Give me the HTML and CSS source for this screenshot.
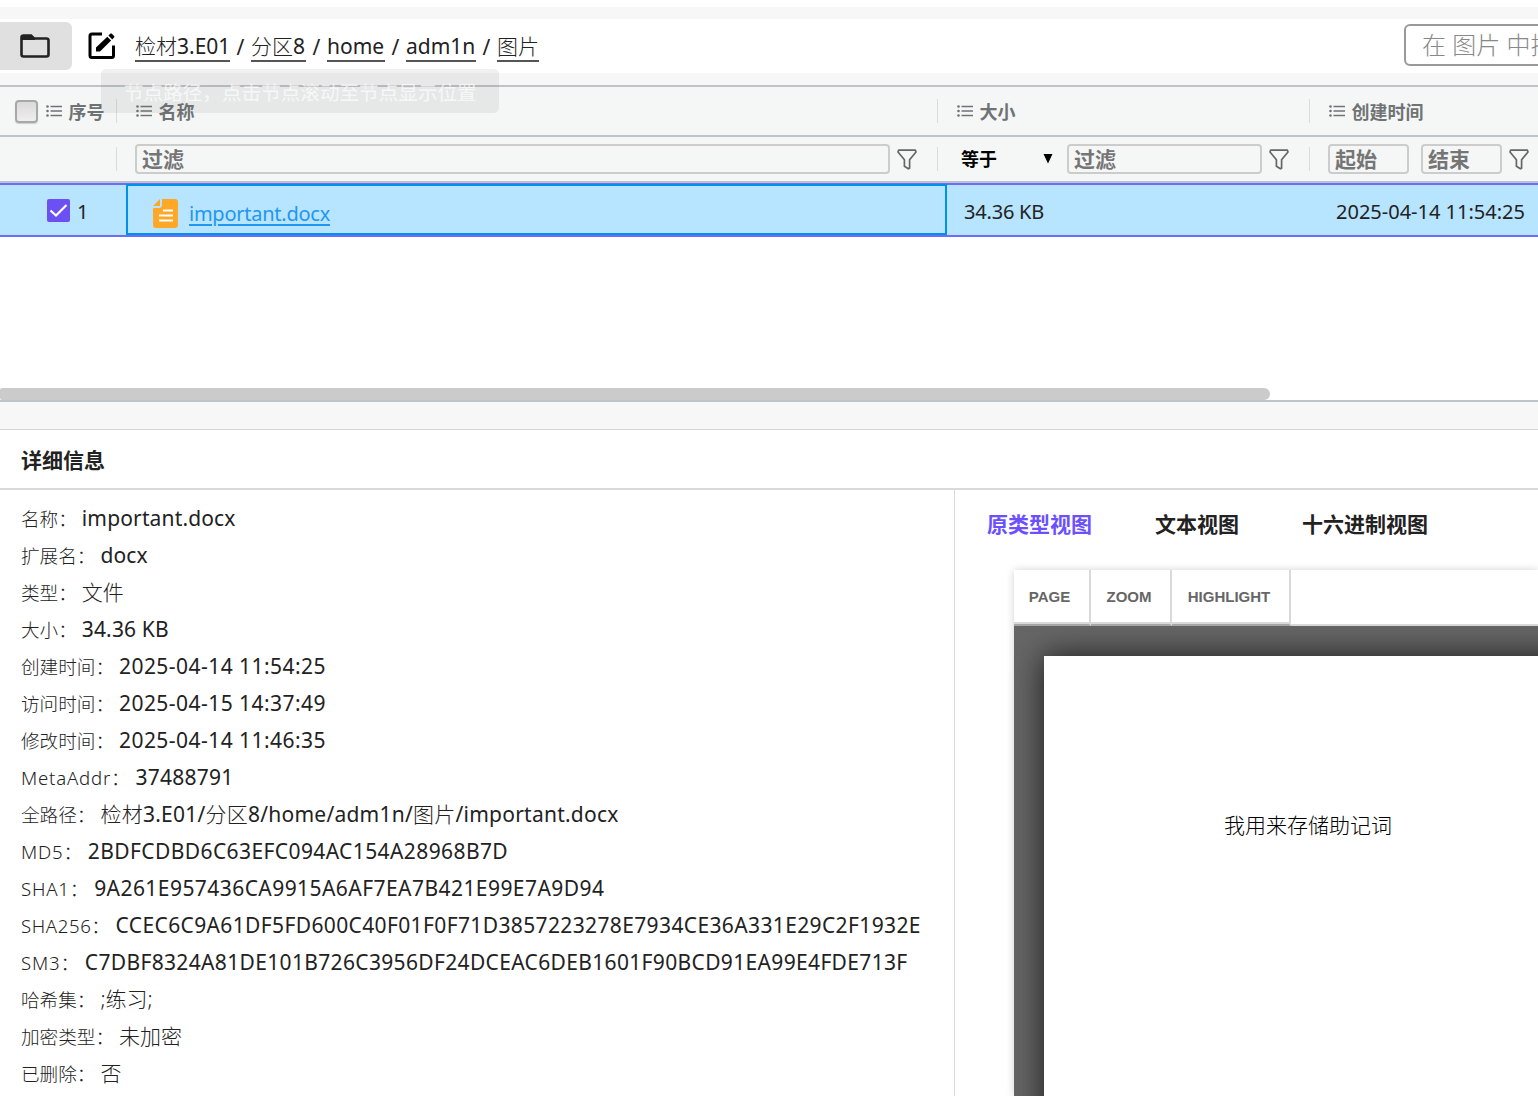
FILE: index.html
```html
<!DOCTYPE html>
<html lang="zh-CN">
<head>
<meta charset="utf-8">
<title>文件详情</title>
<link rel="stylesheet" href="styles.css">
</head>
<body>
<svg class="defs" width="0" height="0">
  <symbol id="list" viewBox="0 0 16 12"><path d="M4.5 1.5H16M4.5 6H16M4.5 10.5H16" stroke="currentColor" stroke-width="1.3"/><g fill="currentColor"><circle cx="1.5" cy="1.5" r="1.3"/><circle cx="1.5" cy="6" r="1.3"/><circle cx="1.5" cy="10.5" r="1.3"/></g></symbol>
  <symbol id="funnel" viewBox="0 0 20 21"><path d="M1.6 1.2H18.4L19 3L12.6 10.8V19.2L11.4 19.8L7.4 17.2V10.8L1 3Z" fill="none" stroke="currentColor" stroke-width="1.7" stroke-linejoin="round"/></symbol>
</svg>
<header class="toolbar">
  <button class="folder"><svg width="30" height="25" viewBox="0 0 30 25"><path d="M3.500 1.500H11L14 4.500H26.500Q28.500 4.500 28.500 6.500V20.500Q28.500 22.500 26.500 22.500H3.500Q1.500 22.500 1.500 20.500V3.500Q1.500 1.500 3.500 1.500Z" fill="none" stroke="#222" stroke-width="2.600"/><path d="M2 1.500H11.500L15 4.500V6H2Z" fill="#222"/></svg></button>
  <svg class="edit" width="28" height="28" viewBox="0 0 28 28"><path d="M14 2H4Q2 2 2 4V23.500Q2 25.500 4 25.500H23.500Q25.500 25.500 25.500 23.500V13.500" fill="none" stroke="#000" stroke-width="3"/><path d="M8 15.500L19.300 4.700L23.100 8.500L12 19.500H8ZM20.400 3.600L22.300 1.700Q23 1 23.800 1.700L26.100 4Q26.800 4.700 26.100 5.500L24.200 7.400Z"/></svg>
  <nav class="crumbs"><a class="c1"><span class="cjk">检材</span>3.E01</a><i>/</i><a class="c2"><span class="cjk">分区</span>8</a><i>/</i><a class="c3">home</a><i>/</i><a class="c4">adm1n</a><i>/</i><a class="c5"><span class="cjk">图片</span></a></nav>
  <div class="search">在 图片 中搜索</div>
  <div class="tooltip">节点路径，点击节点滚动至节点显示位置</div>
</header>
<section class="table">
  <div class="row head">
    <div class="cell num"><span class="box"></span><svg class="list"><use href="#list"/></svg><b>序号</b></div>
    <div class="cell"><svg class="list"><use href="#list"/></svg><b>名称</b></div>
    <div class="cell"><svg class="list"><use href="#list"/></svg><b>大小</b></div>
    <div class="cell last"><svg class="list"><use href="#list"/></svg><b>创建时间</b></div>
  </div>
  <div class="row filters">
    <div class="cell"></div>
    <div class="cell"><span class="input grow">过滤</span><svg class="funnel"><use href="#funnel"/></svg></div>
    <div class="cell"><span class="select">等于<svg width="10" height="10" viewBox="0 0 10 10"><path d="M0.500 0H9.500L5 9.500Z"/></svg></span><span class="input grow">过滤</span><svg class="funnel"><use href="#funnel"/></svg></div>
    <div class="cell last"><span class="input date">起始</span><span class="input date end">结束</span><svg class="funnel"><use href="#funnel"/></svg></div>
  </div>
  <div class="row data">
    <div class="index"><svg width="23" height="23" viewBox="0 0 23 23"><rect width="23" height="23" rx="2" fill="#6c50f3"/><path d="M3.500 11.500L9 16.500L19.500 6" fill="none" stroke="#fff" stroke-width="2.200"/></svg><span>1</span></div>
    <div class="name"><svg width="25" height="29" viewBox="0 0 25 29"><path d="M9 0H22Q25 0 25 3V26Q25 29 22 29H3Q0 29 0 26V9H6Q9 9 9 6ZM7 0V7H0Z" fill="#ffa726"/><path d="M10 11.500H20M6 16.500H20M6 21.500H20" stroke="#fff" stroke-width="2"/></svg><a>important.docx</a></div>
    <div class="size">34.36 KB</div>
    <div class="time">2025-04-14 11:54:25</div>
  </div>
  <div class="blank"><div class="thumb"></div></div>
</section>
<h2 class="title">详细信息</h2>
<main class="detail">
  <dl class="info">
    <div><dt>名称：</dt><dd class="mixed">important.docx</dd></div>
    <div><dt>扩展名：</dt><dd class="mixed">docx</dd></div>
    <div><dt>类型：</dt><dd class="cjk">文件</dd></div>
    <div><dt>大小：</dt><dd class="mixed">34.36 KB</dd></div>
    <div><dt>创建时间：</dt><dd class="stamp">2025-04-14 11:54:25</dd></div>
    <div><dt>访问时间：</dt><dd class="stamp">2025-04-15 14:37:49</dd></div>
    <div><dt>修改时间：</dt><dd class="stamp">2025-04-14 11:46:35</dd></div>
    <div><dt class="latin">MetaAddr：</dt><dd class="path">37488791</dd></div>
    <div><dt>全路径：</dt><dd class="path"><span class="cjk">检材</span>3.E01/<span class="cjk">分区</span>8/home/adm1n/<span class="cjk">图片</span>/important.docx</dd></div>
    <div><dt class="latin">MD5：</dt><dd class="md5">2BDFCDBD6C63EFC094AC154A28968B7D</dd></div>
    <div><dt class="latin">SHA1：</dt><dd class="sha1">9A261E957436CA9915A6AF7EA7B421E99E7A9D94</dd></div>
    <div><dt class="latin sha">SHA256：</dt><dd class="sha256">CCEC6C9A61DF5FD600C40F01F0F71D3857223278E7934CE36A331E29C2F1932E</dd></div>
    <div><dt class="latin">SM3：</dt><dd class="sm3">C7DBF8324A81DE101B726C3956DF24DCEAC6DEB1601F90BCD91EA99E4FDE713F</dd></div>
    <div><dt>哈希集：</dt><dd class="cjk">;练习;</dd></div>
    <div><dt>加密类型：</dt><dd class="cjk">未加密</dd></div>
    <div><dt>已删除：</dt><dd class="cjk">否</dd></div>
  </dl>
  <section class="preview">
    <nav class="tabs"><a class="active">原类型视图</a><a>文本视图</a><a>十六进制视图</a></nav>
    <div class="viewer">
      <div class="menu"><button class="b1">PAGE</button><button class="b2">ZOOM</button><button class="b3">HIGHLIGHT</button></div>
      <div class="canvas"><article class="page">我用来存储助记词</article></div>
    </div>
  </section>
</main>
</body>
</html>
```
FILE: styles.css
```css
* { box-sizing: border-box; }
html, body { height: 100%; }
body {
  margin: 0; padding-top: 7px; overflow: hidden; background: #fff; color: #222;
  font: 21px/1 "Noto Sans", "Noto Sans CJK SC", sans-serif;
  white-space: nowrap;
}
.defs { position: absolute; }
button { border: 0; background: none; padding: 0; }
svg { flex: none; }
.cjk { font-weight: 300; }

.toolbar {
  position: relative; display: flex; align-items: center; height: 78px;
  border: solid #f7f7f7; border-width: 12px 0;
}
.folder { width: 72px; height: 48px; border-radius: 0 6px 6px 0; background: #e0e0e0; display: flex; align-items: center; padding-left: 20px; }
.edit { margin-left: 16px; }
.crumbs { display: flex; align-items: center; margin-left: 19px; padding-top: 2px; font-size: 21px; }
.crumbs a { height: 30px; line-height: 28px; border-bottom: 2px solid #555; }
.crumbs i { width: 21px; text-align: center; font-style: normal; }
.c1 { width: 95px; } .c2 { width: 55px; } .c3 { width: 58px; } .c4 { width: 70px; } .c5 { width: 42px; }
.search {
  flex: none; width: 180px; height: 42px; margin: 0 -46px 2px auto; padding-left: 16px;
  border: 2px solid #999; border-radius: 6px; color: #888; font-size: 24px; font-weight: 300; line-height: 38px;
}
.tooltip {
  position: absolute; left: 101px; top: 50px; width: 398px; height: 44px; padding-left: 23px;
  border-radius: 5px; background: rgba(90, 90, 90, .09); color: rgba(255, 255, 255, .7);
  font-size: 19.6px; line-height: 47px; z-index: 2;
}

.table { border: solid #bdc3c7; border-width: 2px 0; height: 317px; display: flex; flex-direction: column; }
.row { display: grid; grid-template-columns: 126px 821px 372px 1fr; flex: none; }
.head, .filters { grid-template-columns: 117px 821px 372px 1fr; background: #f5f7f7; border-bottom: 2px solid #bdc3c7; color: #6f7373; }
.head { height: 50px; font-size: 18px; }
.filters { height: 46px; }
.cell { display: flex; align-items: center; padding-left: 18px; min-width: 0; }
.head .cell { padding-left: 19px; }
.cell:not(.last) { background: linear-gradient(#d9dcde, #d9dcde) right center / 1px 24px no-repeat; }
.head .num { padding-left: 15px; }
.box { width: 23px; height: 23px; margin-right: 8px; border: 2px solid #a8a8a8; border-radius: 4px; background: linear-gradient(#dadada, #eee); box-shadow: 0 1px 1px #ccc; }
.list { width: 16px; height: 12px; margin-right: 6.500px; }
.cell b { font-weight: 700; padding-top: 1px; }
.input { height: 30px; border: 2px solid #ccc; border-radius: 4px; padding-left: 5px; color: #757575; font-weight: 700; line-height: 27px; }
.grow { flex: 1; }
.filters .cell { padding-right: 20px; }
.funnel { width: 20px; height: 21px; margin: 0 1px 0 7px; color: #666; }
.select { width: 111px; padding: 0 14px 0 5px; display: flex; align-items: center; justify-content: space-between; color: #000; font-size: 18px; font-weight: 700; }
.date { width: 81px; flex: none; }
.end { margin-left: 12px; }
.filters .last { padding-right: 0; }

.data { height: 54px; background: #b7e4ff; border: solid #6c6cff; border-width: 2px 0; color: #222; font-size: 20px; }
.data > div { display: flex; align-items: center; }
.index { padding-left: 47px; gap: 7px; padding-top: 1px; }
.index span { padding-top: 3px; }
.data .name { border: 2px solid #0091ea; padding-left: 25px; gap: 11px; padding-top: 7px; margin-top: -1px; }
.name a { color: #2196f3; text-decoration: underline; text-underline-offset: 3px; text-decoration-thickness: 2px; font-size: 20px; letter-spacing: -.25px; padding-top: 2px; }
.size, .time { padding: 3px 0 0 17px; }
.size { letter-spacing: -.2px; }
.blank { flex: 1; display: flex; align-items: flex-end; }
.thumb { width: 1270px; height: 12px; background: #cbcbcb; border-radius: 2px 6px 6px 2px; }

.title { margin: 0; height: 88px; border-top: 27px solid #f7f7f7; border-bottom: 2px solid #d9d9d9; box-shadow: inset 0 1px #d5d5d5; padding-left: 21px; font-size: 21px; line-height: 62px; }
.detail { display: grid; grid-template-columns: 955px 1fr; height: 606px; }
.info { margin: 0; padding: 10px 0 0 21px; border-right: 1px solid #d9d9d9; }
.info div { display: flex; align-items: center; height: 37px; }
dt { font-size: 18.6px; font-weight: 300; color: #222; padding-top: 1px; }
dd { margin: 0 0 0 5px; }
.latin { letter-spacing: .8px; }
.sha { letter-spacing: .6px; }
.mixed { letter-spacing: .15px; }
.stamp { letter-spacing: .45px; }
.path { letter-spacing: .24px; }
.md5 { letter-spacing: .4px; }
.sha1 { letter-spacing: .44px; }
.sha256 { letter-spacing: .37px; }
.sm3 { letter-spacing: .34px; }

.preview { min-width: 0; padding-left: 32px; }
.tabs { display: flex; gap: 63px; height: 80px; font-weight: 700; line-height: 68px; }
.active { color: #6c50ff; }
.viewer { margin-left: 27px; height: 526px; display: flex; flex-direction: column; box-shadow: 0 0 8px rgba(0, 0, 0, .18); }
.menu { display: flex; height: 56px; flex: none; border-bottom: 2px solid #d9d9d9; background: #fff; }
.menu button { height: 56px; border: solid #d9d9d9; border-width: 0 2px 2px 0; box-shadow: inset 0 -2px #d9d9d9; border-bottom-color: #a6a6a6; font: bold 15px/52px "Liberation Sans", sans-serif; color: #666; }
.menu .b1 { width: 77px; padding-right: 4px; } .menu .b2 { width: 81px; padding-right: 3px; } .menu .b3 { width: 119px; padding-right: 3px; }
.canvas { flex: 1; min-height: 0; overflow: hidden; background: #666; padding: 30px 0 0 30px; }
.page { height: 600px; margin-right: -60px; background: #fff; box-shadow: 0 0 30px rgba(0, 0, 0, .75); padding: 159px 0 0 180px; font-size: 21px; font-weight: 300; color: #000; }
```
